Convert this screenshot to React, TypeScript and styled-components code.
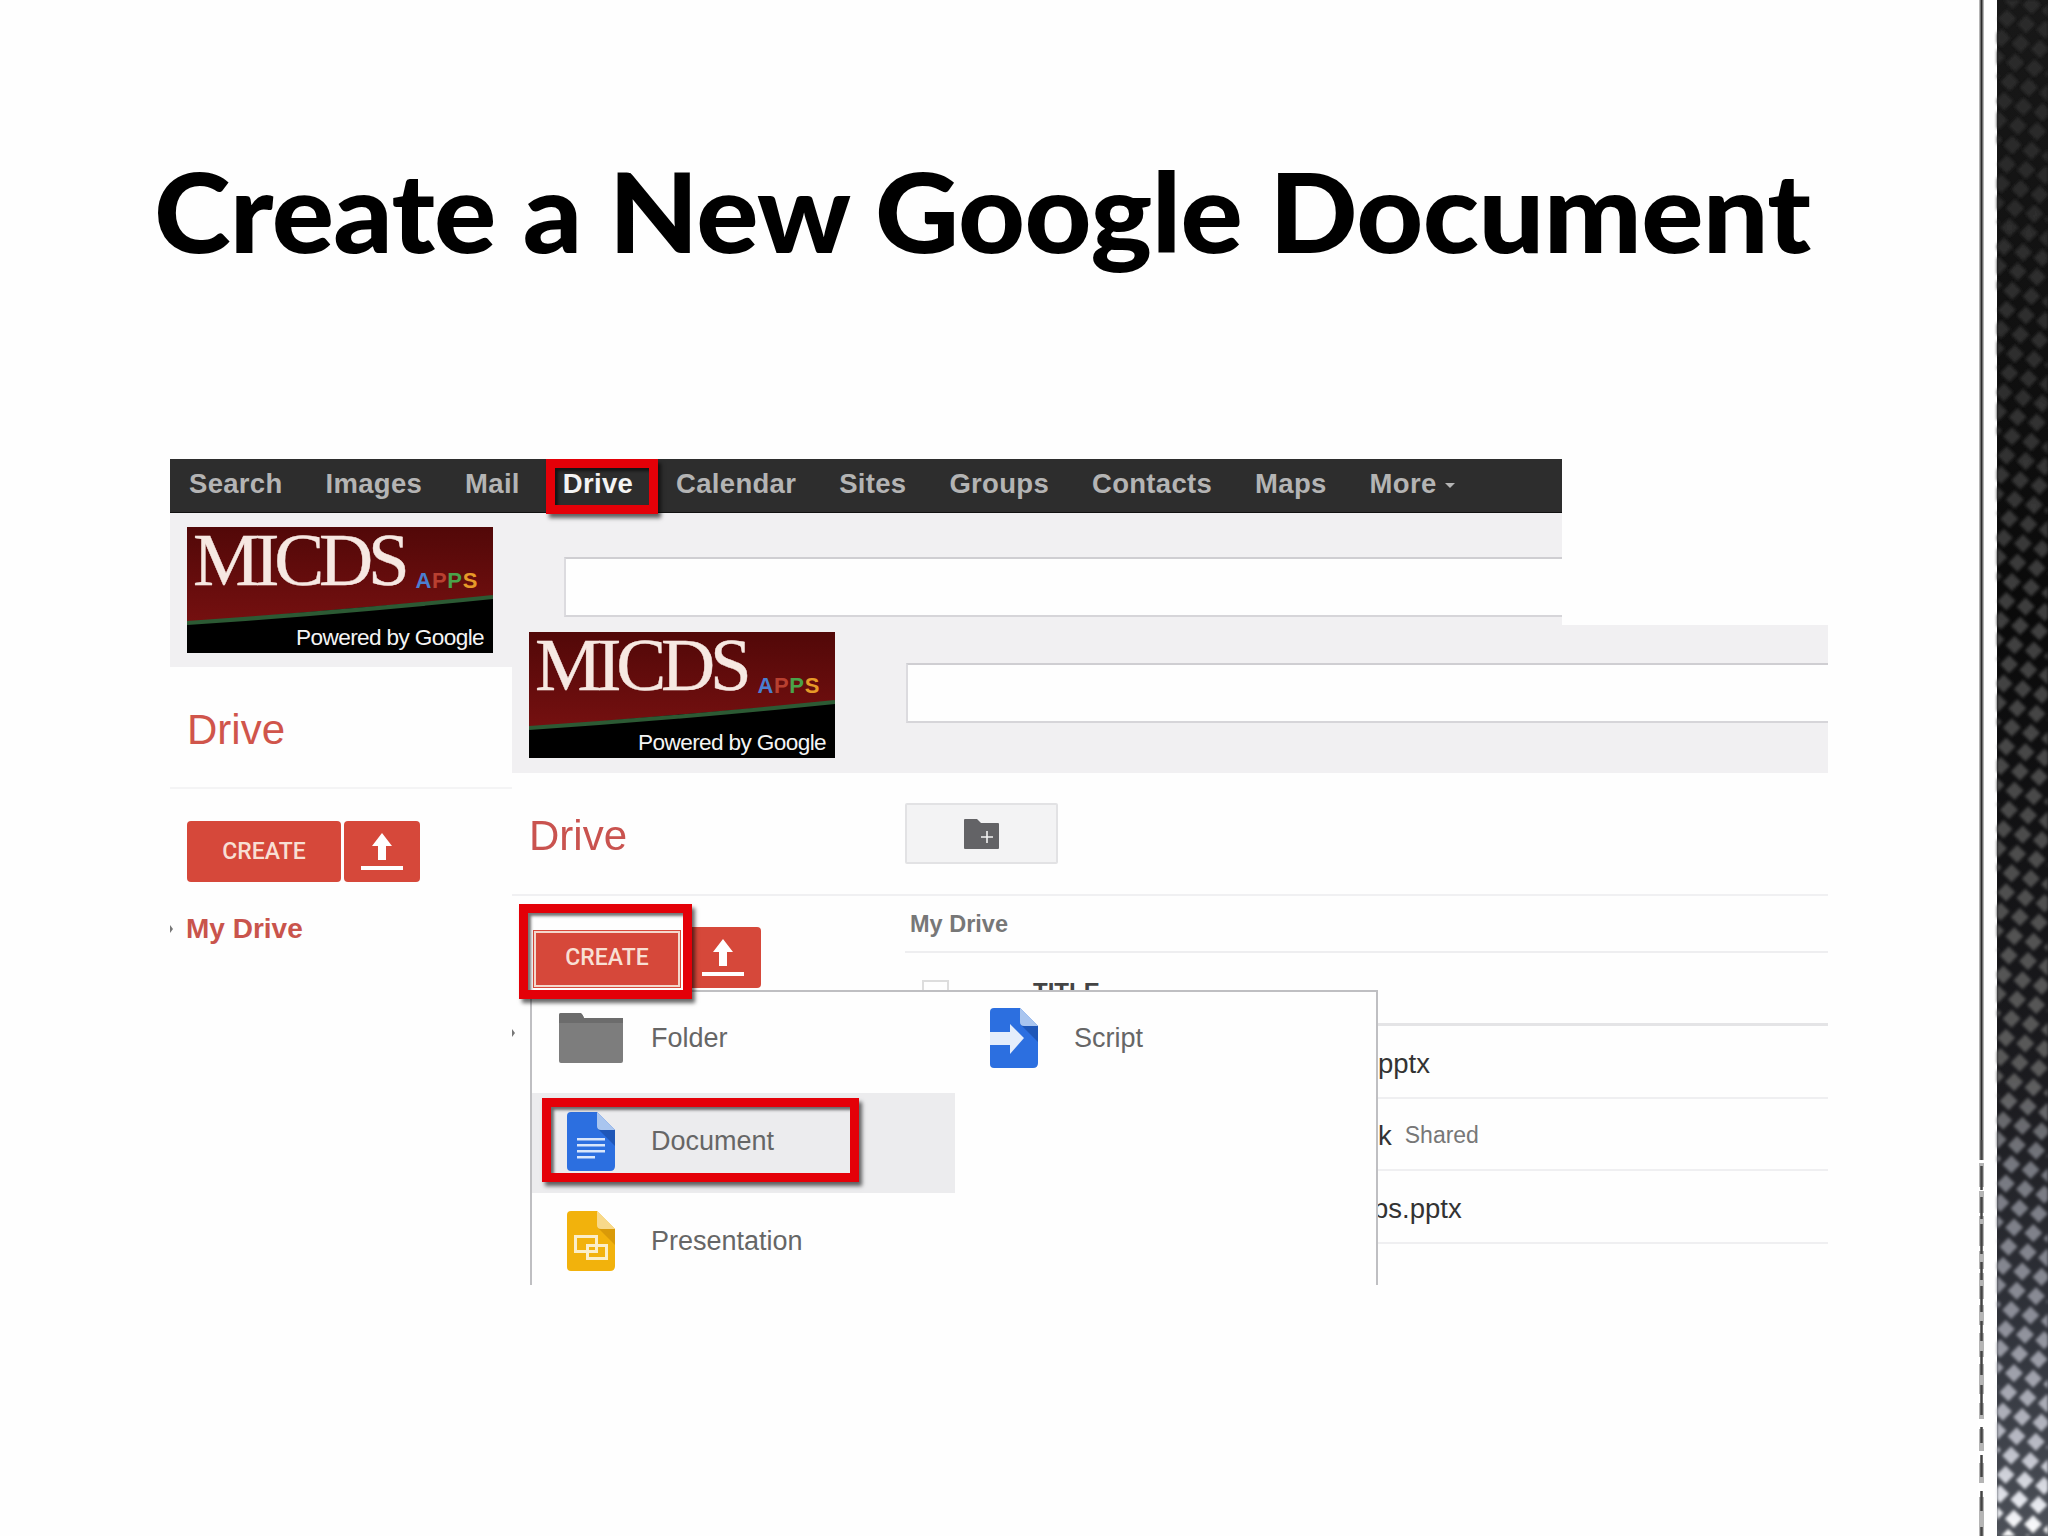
import React from "react";
import styled, { createGlobalStyle } from "styled-components";

const Global = createGlobalStyle`
  html, body { margin: 0; padding: 0; background: #fefefe; }
  #root { width: 2048px; height: 1536px; overflow: hidden; }
`;

const SANS = `"Liberation Sans", Arial, sans-serif`;

const Slide = styled.div`
  width: 2048px; height: 1536px; display: flex; background: #fefefe; overflow: hidden;
`;
const Main = styled.main`
  width: 1978px; flex: none; padding-top: 150px; box-sizing: border-box;
`;
const Title = styled.h1`
  margin: 0 0 189px 154px; font: 900 110px/120px Lato, "Open Sans", sans-serif; color: #000; white-space: nowrap;
  letter-spacing: -0.6px; transform: scaleX(1.057); transform-origin: left center; width: fit-content;
`;
const Collage = styled.div`
  position: relative; margin-left: 170px; width: 1658px; height: 826px; overflow: hidden;
  filter: blur(0.55px); font-family: ${SANS};
`;
const BackWindow = styled.section`
  width: 1392px; height: 826px; background: #fefefe;
`;
const NavBar = styled.nav`
  height: 54px; background: #2d2d2d; border-bottom: 1px solid #111; box-sizing: border-box;
  display: flex; align-items: center; gap: 43px; padding: 0 0 4px 19px;
`;
const NavItem = styled.span<{ $active?: boolean }>`
  font: bold 27.5px/1 ${SANS}; color: ${p => (p.$active ? "#f4f4f4" : "#b4b4b4")}; letter-spacing: .3px;
  display: inline-flex; align-items: center; gap: 9px;
`;
const MoreCaret = styled.i`
  width: 0; height: 0; border: 5px solid transparent; border-top: 5px solid #b4b4b4; border-bottom: 0; margin-top: 3px;
`;
const RedBox = styled.div<{ $x: number; $y: number; $w: number; $h: number }>`
  position: absolute; left: ${p => p.$x}px; top: ${p => p.$y}px; width: ${p => p.$w}px; height: ${p => p.$h}px;
  box-sizing: border-box; border: 9px solid #e40008;
  box-shadow: 3px 4px 4px rgba(0,0,0,.6), inset 3px 3px 3px rgba(0,0,0,.55);
  z-index: 6;
`;
const HeaderBand = styled.header<{ $h: number; $top: number; $logoTop: number }>`
  height: ${p => p.$h}px; background: #f1f0f2; box-sizing: border-box; padding-left: 17px;
  display: flex; align-items: flex-start; gap: 71px;
  & > :first-child { margin-top: ${p => p.$logoTop}px; }
  & > :last-child { margin-top: ${p => p.$top}px; }
`;
const SearchInput = styled.div`
  flex: 1; height: 60px; background: #fefefe; border-top: 2px solid #cfced2; border-bottom: 2px solid #d6d5d9;
  border-left: 2px solid #dcdbdf; box-sizing: border-box;
`;
const LogoBox = styled.div`
  position: relative; flex: none; width: 306px; height: 126px; background: #000;
  display: flex; flex-direction: column; color: #fff;
`;
const LogoArt = styled.svg`
  position: absolute; inset: 0; width: 100%; height: 100%;
`;
const LogoTop = styled.div`
  position: relative; display: flex; align-items: flex-end; height: 64px; padding-left: 6px; gap: 11px;
`;
const LogoWord = styled.span`
  font: 400 75px/62px "Liberation Serif", serif; letter-spacing: -5.2px; color: #f6e8e2; -webkit-text-stroke: .4px #f6e8e2;
`;
const LogoApps = styled.span`
  font: bold 22px/22px ${SANS}; letter-spacing: .6px; margin-bottom: -1px;
`;
const AppsLetter = styled.span<{ $c: string }>` color: ${p => p.$c}; `;
const LogoCaption = styled.span`
  position: relative; margin: 34px 9px 0 0; align-self: flex-end; font: 400 22.6px/26px ${SANS}; letter-spacing: -.62px; color: #f4f4f4;
`;

const Logo = () => (
  <LogoBox>
    <LogoArt viewBox="0 0 306 126" preserveAspectRatio="none">
      <defs>
        <linearGradient id="mar" x1="0" y1="0" x2="0" y2="1">
          <stop offset="0" stopColor="#520808" />
          <stop offset="1" stopColor="#751010" />
        </linearGradient>
      </defs>
      <path d="M0 0H306V70Q150 82 0 96Z" fill="url(#mar)" />
      <path d="M0 96Q150 86 306 70" fill="none" stroke="#2c5a34" strokeWidth="4" />
    </LogoArt>
    <LogoTop>
      <LogoWord>MICDS</LogoWord>
      <LogoApps>
        <AppsLetter $c="#4a7fd0">A</AppsLetter>
        <AppsLetter $c="#b84030">P</AppsLetter>
        <AppsLetter $c="#4aa24a">P</AppsLetter>
        <AppsLetter $c="#e69a28">S</AppsLetter>
      </LogoApps>
    </LogoTop>
    <LogoCaption>Powered by Google</LogoCaption>
  </LogoBox>
);

const Brand = styled.div<{ $h: number }>`
  height: ${p => p.$h}px; box-sizing: border-box; display: flex; align-items: center;
  padding: 6px 0 0 17px; font: 400 42px/1 ${SANS}; color: #d0554b;
  border-bottom: 2px solid #f4f4f5;
`;
const Narrow = styled.div` width: 342px; `;
const ButtonRow = styled.div<{ $top: number; $left: number }>`
  display: flex; align-items: flex-start; gap: 3px; margin: ${p => p.$top}px 0 0 ${p => p.$left}px;
`;
const CreateButton = styled.div<{ $w: number; $h: number; $outlined?: boolean }>`
  width: ${p => p.$w}px; height: ${p => p.$h}px; background: #d6483a; border-radius: 4px; box-sizing: border-box;
  display: flex; align-items: center; justify-content: center; position: relative;
  font: 500 23px/1 Roboto, sans-serif; color: #f8dfd4;
  ${p => p.$outlined ? "outline: 2px solid #f4d8cc; outline-offset: -3px; border-radius: 0; margin-top: 3px; padding-bottom: 4px;" : ""}
`;
const UploadSvg = styled.svg` width: 42px; height: 38px; `;
const Upload = () => (
  <UploadSvg viewBox="0 0 42 38">
    <path d="M21 0L31 13H25V27H17V13H11Z" fill="#fff" />
    <rect x="0" y="33" width="42" height="4" fill="#fff" />
  </UploadSvg>
);
const TreeRow = styled.div<{ $top: number; $gap: number }>`
  display: flex; align-items: center; gap: ${p => p.$gap}px; margin-top: ${p => p.$top}px;
  font: bold 28px/1 ${SANS}; color: #c9544c;
`;
const TreeCaret = styled.i`
  width: 0; height: 0; border-left: 3px solid #777; border-top: 4px solid transparent; border-bottom: 4px solid transparent;
`;

const FrontWindow = styled.section`
  position: absolute; left: 342px; top: 166px; width: 1316px; height: 660px; background: #fefefe; z-index: 2;
`;
const DriveBand = styled.div`
  position: relative; height: 123px; box-sizing: border-box; border-bottom: 2px solid #f0f0f2;
  display: grid; grid-template-columns: 393px 153px; align-items: center;
`;
const BandBrand = styled.div`
  padding-left: 17px; margin-top: 4px; font: 400 42px/1 ${SANS}; color: #c9534f;
`;
const NewFolder = styled.div`
  width: 153px; height: 61px; box-sizing: border-box; background: #f3f3f4; border: 2px solid #e2e2e4; border-radius: 2px;
  display: flex; align-items: center; justify-content: center;
`;
const NewFolderSvg = styled.svg` width: 35px; height: 30px; `;
const Body = styled.div` display: flex; `;
const LeftCol = styled.div` width: 393px; flex: none; `;
const RightCol = styled.div` flex: 1; `;
const Crumb = styled.div`
  height: 57px; box-sizing: border-box; border-bottom: 2px solid #eeeef0; display: flex; align-items: center;
  padding: 2px 0 0 5px; font: bold 23.5px/1 ${SANS}; color: #777;
`;
const HeadRow = styled.div`
  height: 73px; box-sizing: border-box; border-bottom: 3px solid #e4e4e6; padding: 27px 0 0 17px;
  display: flex; align-items: flex-start; gap: 84px; font: bold 24px/1 ${SANS}; color: #444;
`;
const Checkbox = styled.i`
  width: 27px; height: 27px; box-sizing: border-box; border: 2px solid #ddd; flex: none;
`;
const FileRow = styled.div<{ $inset: number }>`
  height: 72.5px; box-sizing: border-box; border-bottom: 2px solid #efeff1; padding: 4px 0 0 ${p => p.$inset}px;
  display: flex; align-items: center; gap: 13px; font: 400 27.5px/1 ${SANS}; color: #333;
`;
const SharedTag = styled.span` font-size: 23px; color: #777; `;

const Menu = styled.div`
  position: absolute; left: 18px; top: 365px; width: 848px; height: 300px; box-sizing: border-box;
  background: #fefefe; border: 2px solid #bfbfc2; border-bottom: 0; display: flex; z-index: 4;
`;
const MenuCol = styled.div<{ $w: number }>` width: ${p => p.$w}px; flex: none; `;
const MenuRow = styled.div<{ $active?: boolean; $first?: boolean }>`
  height: ${p => (p.$first ? 101 : 100)}px; box-sizing: border-box; padding: 0 0 ${p => (p.$first ? 9 : 4)}px 19px;
  display: flex; align-items: center; gap: 20px; background: ${p => (p.$active ? "#ececee" : "transparent")};
  font: 400 27px/1 ${SANS}; color: #666;
`;
const IconSlot = styled.span` width: 80px; display: flex; justify-content: center; flex: none; `;
const FileSvg = styled.svg<{ $w: number; $h: number }>` width: ${p => p.$w}px; height: ${p => p.$h}px; display: block; `;

const FolderIcon = () => (
  <FileSvg $w={64} $h={50} viewBox="0 0 64 50">
    <path d="M2 0H21Q23 0 25 5H62Q64 5 64 7V48Q64 50 62 50H2Q0 50 0 48V2Q0 0 2 0Z" fill="#7d7d7d" />
    <path d="M0 10H64V5H25Q23 0 21 0H2Q0 0 0 2Z" fill="#6c6c6c" />
  </FileSvg>
);
const DocIcon = () => (
  <FileSvg $w={48} $h={59} viewBox="0 0 48 59">
    <path d="M4 0H30L48 18V54Q48 59 43 59H4Q0 59 0 55V4Q0 0 4 0Z" fill="#2c6fe0" />
    <path d="M30 16L48 34V18Z" fill="#1f57b8" />
    <path d="M30 0L48 18H34Q30 18 30 14Z" fill="#a9c5ef" />
    <rect x="10" y="26" width="28" height="2.5" fill="#d8e6fb" />
    <rect x="10" y="32" width="28" height="2.5" fill="#d8e6fb" />
    <rect x="10" y="38" width="28" height="2.5" fill="#d8e6fb" />
    <rect x="10" y="44" width="18" height="2.5" fill="#d8e6fb" />
  </FileSvg>
);
const SlidesIcon = () => (
  <FileSvg $w={48} $h={60} viewBox="0 0 48 60">
    <path d="M4 0H30L48 18V55Q48 60 43 60H4Q0 60 0 56V4Q0 0 4 0Z" fill="#f2b20c" />
    <path d="M30 16L48 34V18Z" fill="#d99a08" />
    <path d="M30 0L48 18H34Q30 18 30 14Z" fill="#f8d98a" />
    <rect x="8.5" y="25.5" width="21" height="15" fill="none" stroke="#fbeec8" strokeWidth="3" />
    <rect x="20.5" y="34.5" width="19" height="13" fill="none" stroke="#fbeec8" strokeWidth="3" />
  </FileSvg>
);
const ScriptIcon = () => (
  <FileSvg $w={48} $h={60} viewBox="0 0 48 60">
    <path d="M4 0H30L48 18V55Q48 60 43 60H4Q0 60 0 56V4Q0 0 4 0Z" fill="#2c6fe0" />
    <path d="M30 16L48 34V18Z" fill="#1f57b8" />
    <path d="M30 0L48 18H34Q30 18 30 14Z" fill="#a9c5ef" />
    <path d="M0 24H20V16L34 30L20 46V37H0Z" fill="#e4edfb" />
  </FileSvg>
);

const Side = styled.svg`
  width: 70px; height: 1536px; flex: none; display: block;
`;
const SideStrip = () => (
  <Side viewBox="0 0 70 1536">
    <defs>
      <linearGradient id="sideBg" x1="0" y1="0" x2="0" y2="1">
        <stop offset="0" stopColor="#181818" />
        <stop offset=".4" stopColor="#0a0a0a" />
        <stop offset=".72" stopColor="#1c1c20" />
        <stop offset=".88" stopColor="#33363e" />
        <stop offset="1" stopColor="#4c5058" />
      </linearGradient>
      <linearGradient id="sideDia" x1="0" y1="0" x2="0" y2="1">
        <stop offset="0" stopColor="#2a2a2a" />
        <stop offset=".25" stopColor="#2e2e2e" />
        <stop offset=".42" stopColor="#404040" />
        <stop offset=".7" stopColor="#5a5a5a" />
        <stop offset=".76" stopColor="#767880" />
        <stop offset=".86" stopColor="#8c8e98" />
        <stop offset=".94" stopColor="#b8bac4" />
        <stop offset=".98" stopColor="#e6e8ee" />
        <stop offset="1" stopColor="#ffffff" />
      </linearGradient>
      <pattern id="lattice" width="20" height="20" patternUnits="userSpaceOnUse" patternTransform="rotate(16) translate(3 0)">
        <rect width="20" height="20" fill="#000" />
        <path d="M10 1L19 10L10 19L1 10Z" fill="#fff" transform="rotate(-16 10 10)" />
      </pattern>
      <mask id="latticeMask" maskUnits="userSpaceOnUse" x="0" y="0" width="70" height="1536">
        <rect x="19" y="0" width="51" height="1536" fill="url(#lattice)" />
      </mask>
      <filter id="soft"><feGaussianBlur stdDeviation="1.6" /></filter>
    </defs>
    <rect width="70" height="1536" fill="#fff" />
    <line x1="3.5" y1="0" x2="3.5" y2="1536" stroke="#b5b5b5" strokeWidth="5" strokeDasharray="1140 0 20 3 24 4 22 3 30 5 18 4 26 6 20 8 24 7 30 9 16 10 22 12 20 14" />
    <line x1="3.5" y1="0" x2="3.5" y2="1140" stroke="#2a2a2a" strokeWidth="2" />
    <line x1="3.5" y1="1140" x2="3.5" y2="1536" stroke="#444" strokeWidth="2.5" strokeDasharray="20 6 24 7 22 5 30 8 18 6 26 9 20 10 24 10 30 12 16 12 22 14 20 16" />
    <rect x="19" y="0" width="51" height="1536" fill="url(#sideBg)" />
    <g filter="url(#soft)">
      <rect x="19" y="0" width="51" height="1536" fill="url(#sideDia)" mask="url(#latticeMask)" />
    </g>
  </Side>
);

export default function App() {
  return (
    <>
      <Global />
      <Slide>
        <Main>
          <Title>Create a New Google Document</Title>
          <Collage>
            <BackWindow>
              <NavBar>
                <NavItem>Search</NavItem>
                <NavItem>Images</NavItem>
                <NavItem>Mail</NavItem>
                <NavItem $active>Drive</NavItem>
                <NavItem>Calendar</NavItem>
                <NavItem>Sites</NavItem>
                <NavItem>Groups</NavItem>
                <NavItem>Contacts</NavItem>
                <NavItem>Maps</NavItem>
                <NavItem>More<MoreCaret /></NavItem>
              </NavBar>
              <HeaderBand $h={154} $top={44} $logoTop={14}>
                <Logo />
                <SearchInput />
              </HeaderBand>
              <Narrow>
                <Brand $h={122}>Drive</Brand>
                <ButtonRow $top={32} $left={17}>
                  <CreateButton $w={154} $h={61}>CREATE</CreateButton>
                  <CreateButton $w={76} $h={61}><Upload /></CreateButton>
                </ButtonRow>
                <TreeRow $top={33} $gap={13}><TreeCaret />My Drive</TreeRow>
              </Narrow>
            </BackWindow>
            <RedBox $x={376} $y={0} $w={112} $h={55} />
            <FrontWindow>
              <HeaderBand $h={148} $top={38} $logoTop={7}>
                <Logo />
                <SearchInput />
              </HeaderBand>
              <DriveBand>
                <BandBrand>Drive</BandBrand>
                <NewFolder>
                  <NewFolderSvg viewBox="0 0 35 30">
                    <path d="M1 0H13L17 4H34Q35 4 35 5V29Q35 30 34 30H1Q0 30 0 29V1Q0 0 1 0Z" fill="#636366" />
                    <path d="M23 12V24M17 18H29" stroke="#f2f2f2" strokeWidth="1.6" />
                  </NewFolderSvg>
                </NewFolder>
              </DriveBand>
              <Body>
                <LeftCol>
                  <ButtonRow $top={31} $left={21}>
                    <CreateButton $w={148} $h={58} $outlined>CREATE</CreateButton>
                    <CreateButton $w={77} $h={61}><Upload /></CreateButton>
                  </ButtonRow>
                  <TreeRow $top={41} $gap={0}><TreeCaret /></TreeRow>
                </LeftCol>
                <RightCol>
                  <Crumb>My Drive</Crumb>
                  <HeadRow><Checkbox />TITLE</HeadRow>
                  <FileRow $inset={473}>pptx</FileRow>
                  <FileRow $inset={473}>k<SharedTag>Shared</SharedTag></FileRow>
                  <FileRow $inset={468}>ps.pptx</FileRow>
                </RightCol>
              </Body>
              <Menu>
                <MenuCol $w={423}>
                  <MenuRow $first><IconSlot><FolderIcon /></IconSlot>Folder</MenuRow>
                  <MenuRow $active><IconSlot><DocIcon /></IconSlot>Document</MenuRow>
                  <MenuRow><IconSlot><SlidesIcon /></IconSlot>Presentation</MenuRow>
                </MenuCol>
                <MenuCol $w={400}>
                  <MenuRow $first><IconSlot><ScriptIcon /></IconSlot>Script</MenuRow>
                </MenuCol>
              </Menu>
              <RedBox $x={7} $y={279} $w={173} $h={95} />
              <RedBox $x={30} $y={473} $w={317} $h={84} />
            </FrontWindow>
          </Collage>
        </Main>
        <SideStrip />
      </Slide>
    </>
  );
}
